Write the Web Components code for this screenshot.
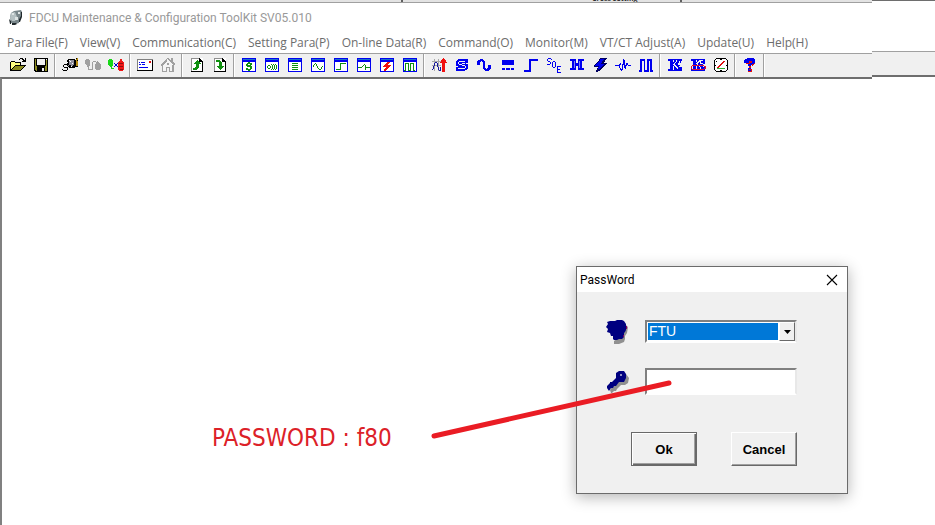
<!DOCTYPE html>
<html lang="en">
<head>
<meta charset="utf-8">
<meta name="viewport" content="width=device-width, initial-scale=1">
<title>FDCU Maintenance &amp; Configuration ToolKit SV05.010</title>
<style>
    html, body { height: 100%; margin: 0; }
    body {
        background: #fff;
        font-family: "Open Sans", "Noto Sans", sans-serif;
        font-size: 12px;
        overflow: hidden;
    }
</style>
</head>
<body>
<fdcu-desktop>
    <fdcu-window caption="FDCU Maintenance &amp; Configuration ToolKit SV05.010">
        <fdcu-menu-bar slot="menu"></fdcu-menu-bar>
        <fdcu-toolbar slot="toolbar"></fdcu-toolbar>
    </fdcu-window>
    <fdcu-note slot="overlay">PASSWORD : f80</fdcu-note>
    <fdcu-password slot="overlay" caption="PassWord"></fdcu-password>
    <fdcu-pointer slot="overlay"></fdcu-pointer>
</fdcu-desktop>

<script>
(function() {
    'use strict';

    const MENU = [
        'Para File(F)', 'View(V)', 'Communication(C)', 'Setting Para(P)', 'On-line Data(R)',
        'Command(O)', 'Monitor(M)', 'VT/CT Adjust(A)', 'Update(U)', 'Help(H)'
    ];

    const BLUE = '#0000f0';

    // Small window frame shared by the parameter icons
    const frame = (inner) => `
        <path fill="#fff" d="M1 1h14v14h-14z"/>
        <path fill="${BLUE}" d="M1 1h14v14h-14zM2 5v9h12v-9z" fill-rule="evenodd"/>
        <path fill="#1a74c8" d="M2 2h12v1h-12z"/>${inner}`;
    const line = (d, color, width = 1) =>
        `<path fill="none" stroke="${color}" stroke-width="${width}" d="${d}"/>`;
    const fill = (d, color) => `<path fill="${color}" d="${d}"/>`;

    const ICONS = {
        open: `<path fill="#000" d="M0 5h1v-1h4v1h6v3h5v1h-1v1h-1v1h-1v1h-1v1h-1v1h-11z"/>
            <path fill="#ffff80" d="M1 5h4v1h5v2h-5v1h-1v1h-1v1h-1v1h-1z"/>
            <path fill="#8c8c20" d="M5 9h9v1h-1v1h-1v1h-1v1h-9v-1h1v-1h1v-1h1z"/>
            <path fill="#000" d="M9 2h1v-1h3v1h1v1h1v-2h1v4h-4v-1h1v-1h-1v-1h-2v1h-1z"/>`,
        save: `<path fill="#000" d="M1 1h14v14h-13v-1h-1z"/>
            <path fill="#8c8c20" d="M2 2h1v7h1v1h8v-1h1v-6h1v11h-2v-4h-8v4h-1v-1h-1z"/>
            <path fill="#f0f0f0" d="M4 2h8v6h-8zM13 2h1v1h-1zM9 11h2v3h-2z"/>`,
        connect: fill('M6 2h7v1h1v7h-1v1h-6v-1h-1v-1h-1v-3h1v-1h-1v-2h1zM2 7h4v1h-4zM1 8h1v2h-1zM2 10h4v1h-4zM5 11h1v2h-1zM1 13h4v1h-4zM0 12h1v1h-1z', '#000')
            + fill('M7 3h5v5h-1v1h-2v-1h-2zM6 8h1v1h-1z', '#8e8e9c')
            + fill('M7 3h1v1h1v1h-1v-1h-1zM9 9h1v1h-1zM10 6h1v1h-1z', '#fff')
            + fill('M14 1h2v8h-2z', '#b58a10') + fill('M14 1h1v1h-1zM15 3h1v1h-1zM14 9h2v1h-2z', '#000'),
        link: fill('M1 2h3v1h1v6h-1v3h3v1h-4v-4h-1v-1h-1v-1h-1v-4h1zM7 5h1v8h-1zM8 4h3v1h-3zM11 5h3v1h1v1h1v5h-1v1h-4v-1h-1v-5h1z', '#a0a0a0')
            + fill('M2 9h1v1h-1zM12 4h1v1h-1z', '#a0a0a0'),
        unlink: fill('M1 2h3v1h1v6h-1v2h2v1h-3v-2h-1v-1h-1v-1h-1v-5h1z', '#18d818')
            + fill('M6 6h1v1h-1zM9 6h1v1h-1zM7 7h2v2h-2zM6 9h1v1h-1zM9 9h1v1h-1z', '#0000d0')
            + fill('M12 2h2v2h1v1h1v8h-1v1h-4v-1h-1v-8h1v-1h1z', '#f01818')
            + fill('M11 6h4v1h-4zM11 9h4v1h-4zM12 12h3v1h-3z', '#901010'),
        mail: `<path fill="#000" d="M0 3h16v11h-16z"/><path fill="#fff" d="M1 3h14v10h-14z"/>
            <path fill="#808080" d="M0 2h16v1h-16zM0 3h1v10h-1z"/>
            <path fill="${BLUE}" d="M2 5h1v1h-1zM4 5h4v1h-4zM2 7h2v1h-2zM5 7h3v1h-3zM2 10h9v1h-9z"/>
            <path fill="#e01010" d="M12 4h2v2h-2z"/>`,
        home: fill('M7 1h2v1h1v1h1v-2h2v4h1v1h1v2h-1v7h-5v-4h-2v4h-5v-6h-1v-2h1v-1h1v-1h1v-1h1v-1h1v-1h1z', '#a0a0a0')
            + fill('M7 2h1v1h1v1h1v1h1v1h1v1h1v7h-3v-4h-4v4h-3v-6h1v-1h1v-1h1v-1h1z', '#f4f4f4')
            + fill('M7 6h2v2h-2zM12 8h1v6h-1z', '#a0a0a0'),
        upload: `<path fill="#fff" d="M2 1h12v14h-12z"/>
            ${line('M2.500 15v-13.500h8', '#909090')}
            <path fill="#000" d="M2 14h12v1h-12zM13 4h1v11h-1zM10 1h1v1h1v1h1v1h1v1h-4z"/>
            <path fill="#109010" d="M8 3h1v1h1v1h1v1h1v1h-2v4h-1v1h-1v1h-4v-2h2v-1h1v-3h-2v-1h1v-1h1v-1h1z"/>`,
        download: `<path fill="#fff" d="M2 1h12v14h-12z"/>
            ${line('M2.500 15v-13.500h8', '#909090')}
            <path fill="#000" d="M2 14h12v1h-12zM13 4h1v11h-1zM10 1h1v1h1v1h1v1h1v1h-4z"/>
            <path fill="#109010" d="M4 3h4v1h1v1h1v4h2v1h-1v1h-1v1h-1v1h-1v-1h-1v-1h-1v-1h-1v-1h2v-4h-3z"/>`,
        money: frame('<path fill="#109010" d="M7 5h2v1h2v2h-2v-1h-2v1h3v1h1v3h-1v1h-1v1h-2v-1h-2v-2h2v1h2v-2h-3v-1h-1v-2h1v-1h1z"/>'),
        signal: frame(fill('M4 8h2v1h-2zM3 9h1v2h-1zM6 9h1v2h-1zM4 11h2v1h-2zM7 7h1v1h-1zM8 8h1v4h-1zM7 12h1v1h-1zM9 7h1v1h-1zM10 8h1v4h-1zM9 12h1v1h-1zM11 7h1v1h-1zM12 8h1v4h-1zM11 12h1v1h-1z', '#109010')),
        list: frame('<path fill="#109010" d="M5 6h6v1h-6zM5 8h6v1h-6zM5 10h6v1h-6zM5 12h6v1h-6z"/>'),
        sine: frame(fill('M3 8h1v2h-1zM4 7h1v1h-1zM5 6h1v1h-1zM6 7h1v2h-1zM7 9h1v2h-1zM8 11h1v1h-1zM9 12h2v1h-2zM11 10h1v2h-1zM12 9h1v1h-1z', '#109010')),
        step: frame(line('M3 12.500h4.500v-6h5', '#109010')),
        contact: frame(fill('M2 10h4v1h-4zM6 9h1v1h-1zM7 8h1v1h-1zM8 7h1v1h-1zM9 8h1v5h-1zM10 10h4v1h-4z', '#109010')),
        fault: frame('<path fill="#f01010" d="M8 5h3v1h-1v1h-1v1h3v1h-1v1h-1v1h-1v1h-1v1h-1v1h-2v-2h1v-1h1v-1h-3v-1h1v-1h1v-1h1v-1h1z"/>'),
        pulse: frame(line('M2 13.500h1.500v-7h3v7h2v-7h3v7h1.500', '#109010')),
        trend: line('M3.500 2v12M7.500 2v12M1 4.500h9M1 8.500h9', '#a8a8a8')
            + fill('M1 12h1v1h-1zM2 9h1v3h-1zM3 6h1v3h-1zM4 5h2v1h-2zM6 6h1v4h-1zM7 10h1v3h-1zM8 13h2v1h-2zM9 10h1v3h-1z', '#1818a0')
            + fill('M12 1h1v1h1v1h1v2h1v1h-2v9h-3v-9h-2v-1h1v-2h1v-1h1z', '#f01010'),
        scan: fill('M4 2h10v4h-2v1h2v5h-1v1h-2v1h-9v-4h2v-1h-2v-5h1v-1h1z', BLUE)
            + fill('M5 4h6v1h-6zM4 5h1v2h-1zM5 7h3v1h-3zM8 8h3v1h-3zM11 9h1v2h-1zM4 11h7v1h-7zM8 6h3v1h-3z', '#f0f0f0'),
        wave: fill('M3 2h3v1h1v1h1v7h1v1h1v-1h1v-3h3v4h-1v1h-1v1h-4v-1h-1v-1h-1v-7h-1v-1h-1v1h-1v3h-3v-4h1v-1h1z', BLUE),
        bars: `<path fill="${BLUE}" d="M2 3h12v5h-12zM2 11h3v2h-3zM6 11h4v2h-4zM11 11h3v2h-3z"/>`,
        edge: `<path fill="${BLUE}" d="M1 13h5v-11h9v2h-7v11h-7z"/>`,
        soe: fill('M2 1h3v1h-3zM1 2h1v2h-1zM2 4h2v1h-2zM4 5h1v2h-1zM1 7h3v1h-3zM5 2h1v1h-1zM7 4h2v1h-2zM6 5h1v5h-1zM9 5h1v5h-1zM7 10h2v1h-2zM11 9h4v1h-4zM11 10h1v5h-1zM12 12h2v1h-2zM11 15h4v1h-4z', BLUE),
        history: `<path fill="${BLUE}" d="M1 2h14v2h-2v7h2v2h-14v-2h2v-7h-2z"/>
            ${line('M5.500 4v7M10.500 4v7', '#8080f4')}
            <path fill="#f0f0f0" d="M7 2h2v4h-2zM7 9h2v4h-2z"/>`,
        flash: `<path fill="#000060" d="M8 1h7v1h-1v1h-1v2h-1v1h3v1h-1v1h-1v1h-1v1h-1v1h-1v1h-1v1h-1v1h-2v1h-2v-2h1v-2h1v-1h-4v-2h1v-1h1v-1h1v-1h1v-1h1v-2h1z"/>
            <path fill="${BLUE}" d="M8 2h4v1h-1v1h-1v2h-1v1h3v1h-1v1h-1v1h-1v1h-1v1h-2v-2h1v-1h-4v-1h1v-1h1v-1h1v-1h1v-1h1z"/>`,
        pulseline: fill('M0 8h4v1h-4zM4 7h1v4h-1zM5 6h1v2h-1zM5 11h1v2h-1zM6 12h1v2h-1zM7 7h1v6h-1zM8 2h1v6h-1zM9 3h1v8h-1zM10 8h1v4h-1zM11 6h1v3h-1zM12 6h1v2h-1zM13 8h3v1h-3z', BLUE),
        train: fill('M2 2h5v11h2v-11h5v11h1v2h-3v-11h-1v11h-5v-11h-2v11h-3v-2h1z', BLUE),
        kc: `<path fill="${BLUE}" d="M1 2h14v2h-1v2h-3v2h2v2h2v4h-14v-2h2v-8h-2z"/>
            ${line('M6.500 3v2M10 3.500l-3 4l4 4M6.500 9v4M12.500 4v2M12 9.500h2', '#f0f0f0')}`,
        ks: `<path fill="${BLUE}" d="M1 2h14v5h-2v3h2v4h-14v-2h2v-8h-2z"/>
            ${line('M6.500 3v2M10 3.500l-3 3l4 5M13 3.500h-3v3h3M6.500 9v4', '#f0f0f0')}
            ${line('M3 8.500h10l2 1v2l-2 1h-10l-2 -1v-2z', '#e01030')}`,
        gauge: fill('M3 1h10v1h1v1h1v10h-1v1h-1v1h-10v-1h-1v-1h-1v-10h1v-1h1z', '#000')
            + fill('M3 2h10v1h1v10h-1v1h-10v-1h-1v-10h1z', '#fff')
            + fill('M4 11h8v1h-8z', '#30b030')
            + fill('M10 4h2v1h-1v1h-1v1h-1v1h-1v1h-1v1h-1v1h-2v-1h1v-1h1v-1h1v-1h1v-1h1v-1h1z', '#e01010')
            + fill('M3 4h1v1h-1zM7 2h2v1h-2zM2 8h1v1h-1zM13 8h1v1h-1zM7 13h2v1h-2z', '#000'),
        help: `<path fill="#e01010" d="M3 3h2v-1h7v1h1v4h-1v1h-1v1h-2v2h-2v1h3v3h-4v-4h1v-2h3v-3h-2v1h-4z"/>
            <path fill="${BLUE}" d="M2 3h1v-1h2v-1h7v1h1v4h-1v1h-2v1h-1v1h-3v-2h2v-1h2v-2h-3v2h-5zM6 11h3v3h-3z"/>
            <path fill="#e01010" d="M7 12h3v3h-4v-1h3v-1h-2z"/>`
    };

    const TOOLS = [
        ['open', 'save'],
        ['connect', 'link', 'unlink'],
        ['mail', 'home'],
        ['upload', 'download'],
        ['money', 'signal', 'list', 'sine', 'step', 'contact', 'fault', 'pulse'],
        ['trend', 'scan', 'wave', 'bars', 'edge', 'soe', 'history', 'flash', 'pulseline', 'train'],
        ['kc', 'ks', 'gauge'],
        ['help']
    ];

    function render(host, html) {
        const template = document.createElement('template');
        template.innerHTML = html;
        host.attachShadow({ mode: 'open' }).appendChild(template.content.cloneNode(true));
    }

    class FdcuDesktop extends HTMLElement {
        constructor() {
            super();
            render(this, `
                <style>
                    :host {
                        display: grid;
                        grid-template-columns: 1fr 63px;
                        position: relative;
                        height: 100%;
                    }
                    .side {
                        display: flex;
                        flex-direction: column;
                        border-top: 1px solid #6e6e6e;
                    }
                    .blank { height: 50px; }
                    .bar {
                        height: 23px;
                        background: #f0f0f0;
                        border-top: 1px solid #a0a0a0;
                        border-bottom: 2px solid #6e6e6e;
                    }
                </style>
                <slot></slot>
                <div class="side"><div class="blank"></div><div class="bar"></div></div>
                <slot name="overlay"></slot>
            `);
        }
    }

    class FdcuWindow extends HTMLElement {
        constructor() {
            super();
            render(this, `
                <style>
                    :host { display: flex; flex-direction: column; min-width: 0; }
                    .behind {
                        display: flex;
                        height: 2px;
                        overflow: hidden;
                        background: #e3e3e3;
                        border-bottom: 1px solid #a0a0a0;
                    }
                    .behind span { border-left: 2px solid #606060; }
                    .behind .left { flex: 0 0 401px; border: 0; }
                    .behind .middle { flex: 0 0 277px; display: flex; justify-content: flex-end; align-items: flex-end; }
                    .behind .right { flex: 1; }
                    .behind b {
                        width: 88px;
                        font-size: 7px;
                        line-height: 7px;
                        color: #303030;
                    }
                    header {
                        display: flex;
                        align-items: center;
                        gap: 6px;
                        height: 30px;
                        padding-left: 8px;
                        color: #999;
                    }
                    h1 {
                        margin: 0;
                        font-family: Roboto, "Open Sans", sans-serif;
                        font-size: 12px;
                        font-weight: 400;
                        line-height: 16px;
                    }
                    .client {
                        flex: 1;
                        border-top: 2px solid #6e6e6e;
                        border-left: 2px solid #808080;
                    }
                </style>
                <div class="behind">
                    <span class="left"></span>
                    <span class="middle"><b>Cross Setting</b></span>
                    <span class="right"></span>
                </div>
                <header>
                    <svg width="15" height="16" viewBox="0 0 15 16" aria-hidden="true">
                        <path fill="#78868a" d="M3 3l3-2 7-1 1 2-1 5-2 2 0 4-4 1-4-1-1-6z"/>
                        <path fill="#b4c0c2" d="M3 3l4-1 2 5-2 4-3 0-2-3z"/>
                        <path fill="#dde4e4" d="M4 3h2v2h-2zM7 7h3v3h-3zM10 2h2v2h-2z"/>
                        <path fill="#20282c" d="M1 9l2 2v3h-1zM4 13h4l1 1-2 1h-3zM11 9l2-3v-4h1v5l-2 5h-1z"/>
                    </svg>
                    <h1></h1>
                </header>
                <slot name="menu"></slot>
                <slot name="toolbar"></slot>
                <main class="client"></main>
            `);
        }

        connectedCallback() {
            this.shadowRoot.querySelector('h1').textContent = this.getAttribute('caption');
        }
    }

    class FdcuMenuBar extends HTMLElement {
        constructor() {
            super();
            render(this, `
                <style>
                    :host { display: block; }
                    nav { display: flex; gap: 12px; height: 20px; padding-left: 7px; }
                    button {
                        padding: 0;
                        border: 0;
                        background: none;
                        color: #6d6d6d;
                        font: inherit;
                        line-height: 20px;
                        white-space: nowrap;
                    }
                </style>
                <nav>${MENU.map((text) => `<button type="button">${text}</button>`).join('')}</nav>
            `);
        }
    }

    class FdcuToolButton extends HTMLElement {
        constructor() {
            super();
            render(this, `
                <style>
                    :host { display: block; }
                    button {
                        display: flex;
                        align-items: center;
                        justify-content: center;
                        width: 23px;
                        height: 22px;
                        padding: 0;
                        border: 0;
                        background: none;
                    }
                </style>
                <button type="button"></button>
            `);
        }

        connectedCallback() {
            const name = this.getAttribute('icon');
            const button = this.shadowRoot.querySelector('button');
            button.setAttribute('aria-label', name);
            button.innerHTML = `<svg width="16" height="16" viewBox="0 0 16 16" shape-rendering="crispEdges">${ICONS[name]}</svg>`;
        }
    }

    class FdcuToolbar extends HTMLElement {
        constructor() {
            super();
            const groups = TOOLS.map((group) =>
                `<div class="group">${group.map((name) => `<fdcu-tool-button icon="${name}"></fdcu-tool-button>`).join('')}</div>`);
            render(this, `
                <style>
                    :host {
                        display: flex;
                        height: 23px;
                        padding-left: 4px;
                        background: #f0f0f0;
                        border-top: 1px solid #a0a0a0;
                    }
                    .group { display: flex; padding: 0 2px; border-right: 1px solid #a0a0a0; box-shadow: 1px 0 #fff; margin-right: 1px; }
                    .group:first-child { border-left: 1px solid #a0a0a0; }
                </style>
                ${groups.join('')}
            `);
        }
    }

    class FdcuNote extends HTMLElement {
        constructor() {
            super();
            render(this, `
                <style>
                    :host {
                        position: absolute;
                        left: 212px;
                        top: 422px;
                        font-family: "DejaVu Sans Condensed", "Noto Sans", sans-serif;
                        font-size: 24px;
                        line-height: 32px;
                        white-space: nowrap;
                        color: #dc2128;
                    }
                </style>
                <slot></slot>
            `);
        }
    }

    class FdcuPointer extends HTMLElement {
        constructor() {
            super();
            render(this, `
                <style>
                    :host { position: absolute; left: 430px; top: 378px; pointer-events: none; }
                    svg { display: block; }
                </style>
                <svg width="244" height="62" viewBox="0 0 244 62" aria-hidden="true">
                    <path d="M4 58L239 5" stroke="#ea1c24" stroke-width="5" stroke-linecap="round"/>
                </svg>
            `);
        }
    }

    class FdcuPassword extends HTMLElement {
        constructor() {
            super();
            render(this, `
                <style>
                    :host {
                        position: absolute;
                        left: 576px;
                        top: 266px;
                        width: 270px;
                        background: #f0f0f0;
                        border: 1px solid #6b6b6b;
                        box-shadow: 0 3px 14px rgba(0, 0, 0, 0.3);
                    }
                    header {
                        display: flex;
                        align-items: center;
                        justify-content: space-between;
                        height: 25px;
                        padding: 0 9px 0 3px;
                        background: #fff;
                    }
                    h2 {
                        margin: 0;
                        font-family: Roboto, "Open Sans", sans-serif;
                        font-size: 12px;
                        font-weight: 400;
                        line-height: 16px;
                    }
                    .close { display: flex; padding: 0; border: 0; background: none; }
                    form { padding: 28px 50px 27px 29px; }
                    .row {
                        display: grid;
                        grid-template-columns: 24px 1fr;
                        gap: 15px;
                        align-items: center;
                    }
                    .row + .row { margin-top: 25px; }
                    label { display: flex; align-items: center; height: 23px; }
                    label svg { flex: none; }
                    .combo {
                        display: grid;
                        grid-template-columns: 1fr 16px;
                        height: 19px;
                        background: #fff;
                    }
                    .combo, input {
                        border: 2px solid;
                        border-color: #808080 #e8e8e8 #fff #808080;
                    }
                    select {
                        appearance: none;
                        grid-area: 1 / 1 / 2 / 3;
                        margin: 1px 17px 1px 1px;
                        padding: 0 1px;
                        border: 0;
                        border-radius: 0;
                        background: #0078d7;
                        color: #fff;
                        font: 14px "Liberation Sans", sans-serif;
                        line-height: 17px;
                    }
                    .arrow {
                        grid-area: 1 / 2 / 2 / 3;
                        display: flex;
                        align-items: center;
                        justify-content: center;
                        background: #f0f0f0;
                        border: 1px solid;
                        border-color: #fff #696969 #696969 #fff;
                        pointer-events: none;
                    }
                    input {
                        box-sizing: border-box;
                        width: 100%;
                        height: 27px;
                        padding: 0 2px;
                        border-radius: 0;
                        outline: 0;
                        background: #fff;
                    }
                    .actions {
                        display: flex;
                        justify-content: space-between;
                        margin: 37px 0 0 25px;
                    }
                    .actions button {
                        width: 66px;
                        height: 34px;
                        padding: 0;
                        background: #f0f0f0;
                        border: 1px solid;
                        border-color: #fff #696969 #696969 #fff;
                        border-radius: 0;
                        box-shadow: inset -1px -1px #a0a0a0;
                        color: #000;
                        font: bold 13px "Liberation Sans", sans-serif;
                    }
                    .actions button.default {
                        border-color: #696969;
                        box-shadow: inset 1px 1px #fff, inset -1px -1px #696969, inset -2px -2px #a0a0a0;
                    }
                </style>
                <header>
                    <h2></h2>
                    <button class="close" type="button" aria-label="Close">
                        <svg width="12" height="12" viewBox="0 0 12 12"><path d="M1 1L11 11M11 1L1 11" stroke="#000" stroke-width="1.100"/></svg>
                    </button>
                </header>
                <form>
                    <div class="row">
                        <label for="user" aria-label="User">
                            <svg width="24" height="26" viewBox="0 0 24 26">
                                <path fill="#909090" d="M8 5h11l3 3-1 6-2 3v3l-1 3-5 2h-5v-3l3-2z"/>
                                <path fill="#000080" d="M7 2l2 0 2-1h5l2 1 2 3 0 6-1 2-1 1v4l-2 2-3 0-2 1-3 0-1-1 0-3-2 0-1-3-3-1 1-3-2-2 2-3-1-2 3-1z"/>
                                <path fill="#800060" d="M20 7h1v3h-1zM17 16h1v2h-1z"/>
                            </svg>
                        </label>
                        <div class="combo">
                            <select id="user"><option>FTU</option></select>
                            <span class="arrow"><svg width="7" height="4" viewBox="0 0 7 4"><path d="M0 0h7L3.500 4z"/></svg></span>
                        </div>
                    </div>
                    <div class="row">
                        <label for="password" aria-label="Password">
                            <svg width="24" height="24" viewBox="0 0 24 24">
                                <path fill="#909090" d="M14 4h6l3 4-1 5-3 2h-4l-4 4-1 2-2 0-2 2H5l-1-3z"/>
                                <path fill="#000080" d="M10 3l3-2h5l2 3v4l-2 4h-4l-1 0-3 4-2 0-1 2-2 0-2 3H3l-2-3 0-2 3-3 0-1 2 0 4-4z"/>
                                <circle cx="15" cy="5" r="1" fill="#c0c0d8"/>
                            </svg>
                        </label>
                        <input id="password" type="password">
                    </div>
                    <div class="actions">
                        <button class="default" type="button">Ok</button>
                        <button type="button">Cancel</button>
                    </div>
                </form>
            `);
        }

        connectedCallback() {
            this.shadowRoot.querySelector('h2').textContent = this.getAttribute('caption');
        }
    }

    customElements.define('fdcu-desktop', FdcuDesktop);
    customElements.define('fdcu-window', FdcuWindow);
    customElements.define('fdcu-menu-bar', FdcuMenuBar);
    customElements.define('fdcu-tool-button', FdcuToolButton);
    customElements.define('fdcu-toolbar', FdcuToolbar);
    customElements.define('fdcu-note', FdcuNote);
    customElements.define('fdcu-pointer', FdcuPointer);
    customElements.define('fdcu-password', FdcuPassword);
})();
</script>
</body>
</html>
